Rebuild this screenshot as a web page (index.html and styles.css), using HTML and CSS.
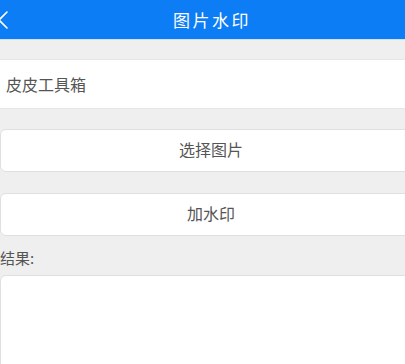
FILE: index.html
```html
<!DOCTYPE html>
<html lang="zh">
<head>
<meta charset="utf-8">
<title>图片水印</title>
<link rel="stylesheet" href="styles.css">
</head>
<body>
<div class="app">
  <header class="topbar">
    <svg class="back" width="10" height="20" viewBox="0 0 10 20"><path d="M7 2 L-1 10 L7 18" fill="none" stroke="#ffffff" stroke-width="1.6" stroke-linecap="round" stroke-linejoin="round"/></svg>
    <h1 class="title">图片水印</h1>
  </header>
  <main class="content">
    <div class="field">皮皮工具箱</div>
    <button class="btn" type="button">选择图片</button>
    <button class="btn" type="button">加水印</button>
    <div class="label">结果:</div>
    <div class="result"></div>
  </main>
</div>
</body>
</html>
```
FILE: styles.css
```css
html, body {
  margin: 0;
  padding: 0;
  overflow: hidden;
  background: #efefef;
}
body {
  font-family: "Noto Sans CJK SC", "Noto Sans", sans-serif;
  color: #555555;
}
.app {
  width: 424px;
  height: 364px;
  display: flex;
  flex-direction: column;
  overflow: hidden;
}
.topbar {
  position: relative;
  height: 39px;
  background: #0d7df5;
  border-bottom: 1px solid #cfe1f6;
  display: flex;
  align-items: center;
  justify-content: center;
  flex-shrink: 0;
}
.back {
  position: absolute;
  left: 0;
  top: 10px;
}
.title {
  margin: 0;
  font-size: 17px;
  font-weight: normal;
  color: #ffffff;
  letter-spacing: 2.5px;
}
.content {
  flex: 1;
  min-height: 0;
  display: flex;
  flex-direction: column;
  padding-top: 19px;
}
.field {
  height: 50px;
  flex-shrink: 0;
  background: #ffffff;
  border-top: 1px solid #e6e6e6;
  border-bottom: 1px solid #e6e6e6;
  box-sizing: border-box;
  display: flex;
  align-items: center;
  padding-left: 6px;
  font-size: 16px;
  color: #555555;
}
.btn {
  margin: 20px 0 0 0;
  height: 43px;
  flex-shrink: 0;
  width: 422px;
  background: #ffffff;
  border: 1px solid #e0e0e0;
  border-radius: 6px;
  font-family: inherit;
  font-size: 16px;
  color: #555555;
  padding: 0 0 3px 0;
}
.btn + .btn {
  margin-top: 21px;
}
.label {
  height: 39px;
  flex-shrink: 0;
  display: flex;
  align-items: center;
  font-size: 15px;
  color: #555555;
  padding-top: 4px;
  box-sizing: border-box;
}
.result {
  flex: 1;
  margin-bottom: -10px;
  width: 422px;
  background: #ffffff;
  border: 1px solid #e0e0e0;
  border-radius: 6px;
}
```
